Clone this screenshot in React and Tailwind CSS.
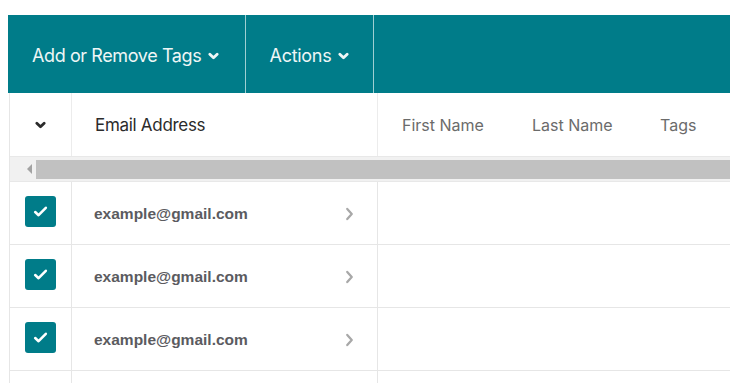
import React from "react";

const Chevron = ({ className = "" }) => (
  <svg viewBox="0 0 12 8" className={className} fill="none" stroke="currentColor" strokeWidth="3" strokeLinecap="round" strokeLinejoin="round">
    <path d="M2 2l4 4 4-4" />
  </svg>
);

const RightArrow = () => (
  <svg viewBox="0 0 8 12" className="w-[9px] h-[14px] text-[#a8a8a8]" fill="none" stroke="currentColor" strokeWidth="2" strokeLinecap="round" strokeLinejoin="round">
    <path d="M2 1.5l4 4.5-4 4.5" />
  </svg>
);

const Check = () => (
  <svg viewBox="0 0 16 16" className="w-[17px] h-[17px] text-white" fill="none" stroke="currentColor" strokeWidth="2.4" strokeLinecap="round" strokeLinejoin="round">
    <path d="M3 8.5l3.2 3L13 4.5" />
  </svg>
);

const rows = ["example@gmail.com", "example@gmail.com", "example@gmail.com"];

const Row = ({ email }) => (
  <div className="flex h-[63px] border-b border-[#e6e6e6]">
    <div className="w-[62px] border-r border-[#e6e6e6] flex items-start justify-center pt-[14px]">
      <div className="w-[31px] h-[31px] rounded-[3px] bg-[#007c89] flex items-center justify-center">
        <Check />
      </div>
    </div>
    <div className="w-[306px] border-r border-[#e6e6e6] flex items-start pt-[20px] pl-[22px] pr-[23px]">
      <span className="flex-1 text-[15.5px] font-bold text-[#5b5b5f] font-['Liberation_Sans',Arial,sans-serif]">{email}</span>
      <span className="pt-[5px]">{email && <RightArrow />}</span>
    </div>
    <div className="flex-1" />
  </div>
);

export default function App() {
  return (
    <div className="w-[750px] h-[383px] overflow-hidden bg-white pt-[15px] pl-[8px] font-['Inter',sans-serif]">
      <div className="w-[722px]">
        <div className="flex h-[78px] bg-[#007c89] text-[#eef6f6]">
          <div className="w-[238px] border-r border-[#9fcfd2] flex items-center pl-[24px] gap-[7px] pt-[3px]">
            <span className="text-[18px] tracking-[-0.4px]">Add or Remove Tags</span>
            <Chevron className="w-[11px] h-[8px]" />
          </div>
          <div className="w-[128px] border-r border-[#9fcfd2] flex items-center justify-center gap-[7px] pt-[3px]">
            <span className="text-[18px] tracking-[-0.3px]">Actions</span>
            <Chevron className="w-[11px] h-[8px]" />
          </div>
          <div className="flex-1" />
        </div>

        <div className="ml-px border-l border-[#e6e6e6]">
          <div className="flex h-[63px]">
            <div className="w-[62px] border-r border-[#ececec] flex items-center justify-center">
              <Chevron className="w-[11px] h-[8px] text-[#2b2b2b]" />
            </div>
            <div className="w-[306px] border-r border-[#ececec] flex items-center pl-[23px] pt-[2px]">
              <span className="text-[17px] text-[#2b2b2b] tracking-[-0.3px]">Email Address</span>
            </div>
            <div className="flex-1 flex items-center pl-[24px] text-[16px] text-[#6b6b6b] pt-[1px]">
              <span className="w-[130px]">First Name</span>
              <span className="w-[128px]">Last Name</span>
              <span>Tags</span>
            </div>
          </div>

          <div className="h-[26px] bg-[#f1f1f1] flex items-center border-t border-b border-[#e8e8e8]">
            <div className="w-[25px] flex items-center justify-end pr-[3px]">
              <div className="w-0 h-0 border-y-[5px] border-y-transparent border-r-[5px] border-r-[#a3a3a3]" />
            </div>
            <div className="flex-1 h-[19px] bg-[#c1c1c1] ml-[1px]" />
          </div>

          {rows.map((e, i) => (
            <Row key={i} email={e} />
          ))}
          <Row email="" />
        </div>
      </div>
    </div>
  );
}
